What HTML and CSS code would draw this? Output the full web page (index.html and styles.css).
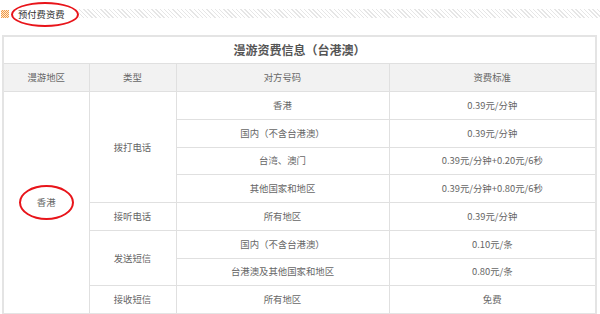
FILE: index.html
```html
<!DOCTYPE html>
<html lang="zh-CN">
<head>
<meta charset="utf-8">
<title>预付费资费</title>
<link rel="stylesheet" href="styles.css">
</head>
<body>
<div class="section-head">
  <span class="dot-icon"></span>
  <span class="section-title circled">预付费资费</span>
  <span class="stripe"></span>
</div>
<table class="rate-table">
  <colgroup>
    <col class="c1"><col class="c2"><col class="c3"><col class="c4">
  </colgroup>
  <tr class="caption-row"><th colspan="4">漫游资费信息（台港澳）</th></tr>
  <tr class="head-row">
    <td>漫游地区</td>
    <td>类型</td>
    <td>对方号码</td>
    <td>资费标准</td>
  </tr>
  <tr>
    <td rowspan="8" class="region"><span class="circled-region">香港</span></td>
    <td rowspan="4">拨打电话</td>
    <td>香港</td>
    <td>0.39元/分钟</td>
  </tr>
  <tr><td>国内（不含台港澳）</td><td>0.39元/分钟</td></tr>
  <tr><td>台湾、澳门</td><td>0.39元/分钟+0.20元/6秒</td></tr>
  <tr><td>其他国家和地区</td><td>0.39元/分钟+0.80元/6秒</td></tr>
  <tr><td>接听电话</td><td>所有地区</td><td>0.39元/分钟</td></tr>
  <tr><td rowspan="2">发送短信</td><td>国内（不含台港澳）</td><td>0.10元/条</td></tr>
  <tr><td>台港澳及其他国家和地区</td><td>0.80元/条</td></tr>
  <tr><td>接收短信</td><td>所有地区</td><td>免费</td></tr>
</table>
</body>
</html>
```

FILE: styles.css
```css
html, body {
  margin: 0;
  padding: 0;
  background: #fff;
}
body {
  font-family: "Noto Sans CJK SC", "Liberation Sans", sans-serif;
  color: #666;
  width: 600px;
  height: 314px;
  overflow: hidden;
}
.section-head {
  display: flex;
  align-items: center;
  height: 27px;
  padding-left: 1px;
  margin-bottom: 8px;
}
.dot-icon {
  width: 8px;
  height: 8px;
  flex: none;
  background: repeating-conic-gradient(#f29a45 0 25%, #fde9d2 0 50%) 0 0 / 2px 2px;
}
.section-title {
  position: relative;
  margin-left: 9px;
  font-size: 9.3px;
  line-height: 12px;
  color: #333;
  flex: none;
}
.circled::before {
  content: "";
  position: absolute;
  left: -7px;
  top: -6px;
  width: 64px;
  height: 21px;
  border: 2px solid #e8141a;
  border-radius: 50%;
}
.stripe {
  flex: 1;
  height: 9px;
  margin-left: 14px;
  background: repeating-linear-gradient(45deg, #e6e6e6 0 1px, #fff 1px 3px);
}
.rate-table {
  border-collapse: collapse;
  margin-left: 2px;
  width: 595px;
  table-layout: fixed;
  border: 2px solid #e4e4e4;
}
.rate-table tr {
  height: 27.75px;
}
.rate-table td, .rate-table th {
  border: 1px solid #e0e0e0;
  text-align: center;
  vertical-align: middle;
  padding: 0;
  font-size: 9.4px;
  font-weight: normal;
  line-height: 11px;
}
.caption-row {
  height: 28px;
}
.caption-row th {
  font-size: 12px;
  font-weight: bold;
  color: #555;
  line-height: 14px;
}
.head-row td {
  background: #f2f2f2;
}
.c1 { width: 86px; }
.c2 { width: 87px; }
.c3 { width: 213px; }
.c4 { width: auto; }
.circled-region {
  position: relative;
  display: inline-block;
}
.circled-region::before {
  content: "";
  position: absolute;
  left: -18px;
  top: -12px;
  width: 51px;
  height: 31px;
  border: 2px solid #e8141a;
  border-radius: 50%;
}
```
